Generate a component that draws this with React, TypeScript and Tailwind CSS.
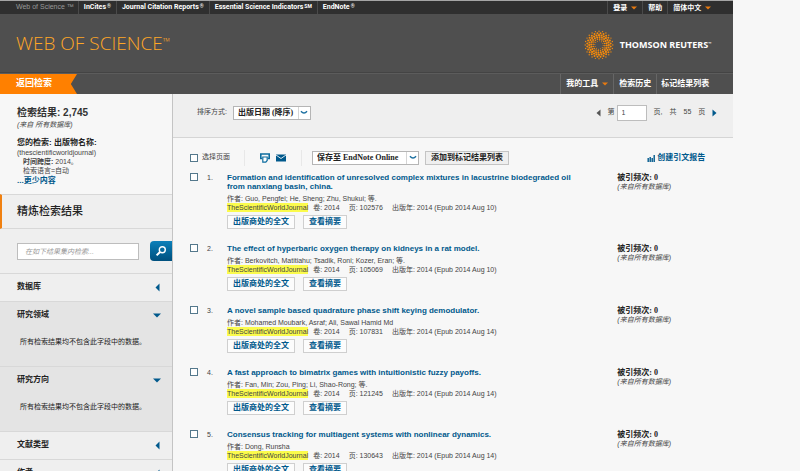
import React, { useState } from "react";

interface Article {
  id: number;
  title: string;
  authors: string;
  pages: string;
  published: string;
}

interface Facet {
  name: string;
  open: boolean;
}

const products = [
  { name: "InCites", mark: "®" },
  { name: "Journal Citation Reports", mark: "®" },
  { name: "Essential Science Indicators", mark: "SM" },
  { name: "EndNote", mark: "®" },
];

const articles: Article[] = [
  {
    id: 1,
    title:
      "Formation and identification of unresolved complex mixtures in lacustrine biodegraded oil from nanxiang basin, china.",
    authors: "Guo, Pengfei; He, Sheng; Zhu, Shukui; 等.",
    pages: "102576",
    published: "2014 (Epub 2014 Aug 10)",
  },
  {
    id: 2,
    title:
      "The effect of hyperbaric oxygen therapy on kidneys in a rat model.",
    authors: "Berkovitch, Matitiahu; Tsadik, Roni; Kozer, Eran; 等.",
    pages: "105069",
    published: "2014 (Epub 2014 Aug 10)",
  },
  {
    id: 3,
    title: "A novel sample based quadrature phase shift keying demodulator.",
    authors: "Mohamed Moubark, Asraf; Ali, Sawal Hamid Md",
    pages: "107831",
    published: "2014 (Epub 2014 Aug 14)",
  },
  {
    id: 4,
    title: "A fast approach to bimatrix games with intuitionistic fuzzy payoffs.",
    authors: "Fan, Min; Zou, Ping; Li, Shao-Rong; 等.",
    pages: "121245",
    published: "2014 (Epub 2014 Aug 14)",
  },
  {
    id: 5,
    title: "Consensus tracking for multiagent systems with nonlinear dynamics.",
    authors: "Dong, Runsha",
    pages: "130643",
    published: "2014 (Epub 2014 Aug 14)",
  },
];

const initialFacets: Facet[] = [
  { name: "数据库", open: false },
  { name: "研究领域", open: true },
  { name: "研究方向", open: true },
  { name: "文献类型", open: false },
  { name: "作者", open: false },
];

// dots of the logo, laid on rings that turn a little more towards the middle
const rings = [
  { radius: 13.8, count: 24, size: 0.7 },
  { radius: 11.8, count: 24, size: 1 },
  { radius: 9.8, count: 24, size: 1.1 },
  { radius: 7.8, count: 20, size: 1 },
  { radius: 5.9, count: 16, size: 0.8 },
  { radius: 4.2, count: 12, size: 0.5 },
];

const dots = rings.flatMap((ring, r) =>
  Array.from({ length: ring.count }, (_, i) => {
    const angle = (i / ring.count) * Math.PI * 2 + r * 0.13;
    return {
      x: 15 + ring.radius * Math.cos(angle),
      y: 15 + ring.radius * Math.sin(angle),
      size: ring.size,
    };
  }),
);

function LogoMark() {
  return (
    <svg viewBox="0 0 30 30" className="size-[30px]" aria-hidden="true">
      {dots.map((dot, i) => (
        <circle key={i} cx={dot.x} cy={dot.y} r={dot.size} fill="#f58a0b" />
      ))}
    </svg>
  );
}

function Caret() {
  return (
    <svg viewBox="0 0 6 4" className="h-1 w-1.5" aria-hidden="true">
      <path d="M0 0.5h6L3 3.5z" fill="#e87a10" />
    </svg>
  );
}

function SelectBox({
  label,
  value,
  className,
}: {
  label: string;
  value: string;
  className: string;
}) {
  return (
    <div className={`relative h-3.5 ${className}`}>
      <select
        aria-label={label}
        className="block h-full w-full appearance-none border border-[#b5b5b5] bg-white pr-3.5 pl-1 font-['Liberation_Serif','Noto_Sans_CJK_SC',serif] text-[8px] leading-3 font-bold text-[#222]"
      >
        <option>{value}</option>
      </select>
      <span className="pointer-events-none absolute inset-y-px right-px flex w-3 items-center justify-center border-l border-[#d5d5d5]">
        <svg viewBox="0 0 8 5" className="h-[5px] w-2" aria-hidden="true">
          <path
            d="M1 1.2 Q4 4.8 7 1.2"
            fill="none"
            stroke="#1b6fa0"
            strokeWidth="1.5"
          />
        </svg>
      </span>
    </div>
  );
}

function Checkbox({ label }: { label: string }) {
  return (
    <input
      type="checkbox"
      aria-label={label}
      className="size-2 shrink-0 appearance-none border border-[#54788c] bg-white checked:bg-[#00598c]"
    />
  );
}

function TopBar() {
  return (
    <div className="flex h-3.5 items-stretch border-t border-[#a5a5a5] bg-[#2f2f2f] text-[7px] leading-3 font-bold text-white">
      <span className="pr-1 pl-4 font-normal text-[#999]">
        Web of Science ™
      </span>
      {products.map((product) => (
        <a
          key={product.name}
          href="#"
          className="border-l border-[#4a4a4a] px-[5px] font-['Roboto',sans-serif]"
        >
          {product.name}
          <span className="pl-px align-[1px] text-[5px] leading-none">
            {product.mark}
          </span>
        </a>
      ))}
      <div className="ml-auto flex pr-[17px]">
        <button className="flex items-center gap-1 border-l border-[#4a4a4a] px-[5px]">
          登录 <Caret />
        </button>
        <button className="border-l border-[#4a4a4a] px-[5px]">帮助</button>
        <button className="flex items-center gap-1 border-l border-[#4a4a4a] px-[5px]">
          简体中文 <Caret />
        </button>
      </div>
    </div>
  );
}

function Header() {
  return (
    <header className="bg-[#4f4f4f] text-white">
      <TopBar />
      <div className="flex h-[59px] items-center justify-between border-b border-[#444] pr-[22px] pl-4">
        <a
          href="#"
          className="font-['Open_Sans',sans-serif] text-[19px] leading-6 font-light text-[#ffa726]"
        >
          WEB OF SCIENCE
          <span className="align-[5px] text-[10px] leading-none">™</span>
        </a>
        <div className="flex items-center gap-1.5 pt-1">
          <LogoMark />
          <span className="font-['Open_Sans',sans-serif] text-[9px] font-bold">
            THOMSON REUTERS
            <span className="align-[3px] text-[4px] leading-none">™</span>
          </span>
        </div>
      </div>
      <nav className="flex h-[21px] items-stretch justify-between border-t border-[#5c5c5c] text-[8px] font-bold">
        <a
          href="#"
          className="flex w-[77px] items-center bg-[#ff8000] pl-4 text-[9px] [clip-path:polygon(0_0,100%_0,92%_50%,100%_100%,0_100%)]"
        >
          返回检索
        </a>
        <div className="flex pr-5">
          <button className="flex items-center gap-1 border-l border-[#666] px-[5px]">
            我的工具 <Caret />
          </button>
          <a
            href="#"
            className="flex items-center border-l border-[#666] px-[5px]"
          >
            检索历史
          </a>
          <a
            href="#"
            className="flex items-center border-l border-[#666] px-1"
          >
            标记结果列表
          </a>
        </div>
      </nav>
    </header>
  );
}

function Sidebar() {
  const [facets, setFacets] = useState(initialFacets);

  const toggle = (name: string) => {
    setFacets(
      facets.map((facet) =>
        facet.name === name ? { ...facet, open: !facet.open } : facet,
      ),
    );
  };

  return (
    <aside className="w-[173px] shrink-0 border-r border-[#c4c4c4] bg-[#efefef]">
      <div className="h-[100px] bg-[#f7f7f7] pt-3 pl-[17px] text-[7px] leading-[9px] text-[#444]">
        <h1 className="text-[10px] leading-[14px] font-bold text-[#333]">
          检索结果: 2,745
        </h1>
        <p className="italic">(来自 所有数据库)</p>
        <p className="mt-2 text-[8px] leading-[11px]">
          <b className="text-[#222]">您的检索: 出版物名称:</b>
        </p>
        <p>(thescientificworldjournal)</p>
        <p className="pl-1.5">
          <b>时间跨度:</b> 2014。
        </p>
        <p className="pl-1.5">检索语言=自动</p>
        <a
          href="#"
          className="block text-[8px] leading-[11px] font-bold text-[#00598c]"
        >
          ...更少内容
        </a>
      </div>
      <h2 className="h-[35px] border-y border-l-2 border-y-[#d8d8d8] border-l-[#f08010] pl-[15px] text-[11px] leading-8 font-medium text-[#222]">
        精炼检索结果
      </h2>
      <form
        className="flex h-11 items-center justify-between pl-[17px]"
        onSubmit={(e) => e.preventDefault()}
      >
        <input
          type="text"
          aria-label="在如下结果集内检索"
          placeholder="在如下结果集内检索..."
          className="h-[17px] w-[122px] border border-[#bdbdbd] bg-white px-[7px] text-[7px] italic placeholder:text-[#999]"
        />
        <button
          aria-label="检索"
          className="flex h-5 w-[22px] items-center justify-center rounded-l-sm bg-linear-to-b from-[#0d80ba] to-[#00507e]"
        >
          <svg viewBox="0 0 12 12" className="size-3" aria-hidden="true">
            <circle
              cx="7.3"
              cy="4.7"
              r="3"
              fill="none"
              stroke="#fff"
              strokeWidth="1.4"
            />
            <path d="M5 7L1.6 10.4" stroke="#fff" strokeWidth="2" />
          </svg>
        </button>
      </form>
      {facets.map((facet) => (
        <section
          key={facet.name}
          className={`border-t border-[#d8d8d8] ${facet.open ? "bg-[#e4e4e4]" : ""}`}
        >
          <button
            aria-expanded={facet.open}
            onClick={() => toggle(facet.name)}
            className="flex h-[27px] w-full items-center justify-between pr-2.5 pb-px pl-[17px] text-[8px] font-bold text-[#222]"
          >
            {facet.name}
            <svg viewBox="0 0 10 10" className="size-2.5" aria-hidden="true">
              <path
                d={facet.open ? "M1 3.5h8L5 7.5z" : "M7.5 1.5v8L3.5 5.5z"}
                fill="#00598c"
              />
            </svg>
          </button>
          {facet.open && (
            <p className="h-[37px] pt-2 pl-5 text-[7px] leading-[9px] text-[#222]">
              所有检索结果均不包含此字段中的数据。
            </p>
          )}
        </section>
      ))}
    </aside>
  );
}

function SortBar() {
  return (
    <div className="flex h-11 items-center justify-between border-b border-[#d5d5d5] bg-[#efefef] pr-4 pb-1.5 pl-6 text-[7px] text-[#444]">
      <div className="flex items-center gap-1.5">
        <span>排序方式:</span>
        <SelectBox
          label="排序方式"
          value="出版日期 (降序)"
          className="w-[78px]"
        />
      </div>
      <div className="flex items-center gap-[7px]">
        <button aria-label="上一页">
          <svg viewBox="0 0 5 8" className="h-2 w-[5px]" aria-hidden="true">
            <path d="M4.5 0.5v7L0.5 4z" fill="#555" />
          </svg>
        </button>
        <label className="flex items-center gap-0.5">
          第
          <input
            type="text"
            defaultValue="1"
            className="h-4 w-[30px] border border-[#bdbdbd] bg-white px-1 text-[7px]"
          />
        </label>
        <span>页,</span>
        <span>共</span>
        <span>55</span>
        <span>页</span>
        <button aria-label="下一页">
          <svg viewBox="0 0 5 8" className="h-2 w-[5px]" aria-hidden="true">
            <path d="M0.5 0.5v7L4.5 4z" fill="#00598c" />
          </svg>
        </button>
      </div>
    </div>
  );
}

function Toolbar() {
  return (
    <div className="flex h-[35px] items-center pt-1 pr-7 pl-[17px] text-[8px] text-[#444]">
      <Checkbox label="选择页面" />
      <span className="pl-1 text-[7px]">选择页面</span>
      <div className="ml-3.5 flex h-4 items-center gap-1.5 border-x border-[#e8e8e8] px-[15px]">
        <button aria-label="打印">
          <svg viewBox="0 0 10 10" className="size-2.5" aria-hidden="true">
            <path
              d="M2 5.5H0.8V1h8.4v4.5H8"
              fill="none"
              stroke="#0c6c9f"
              strokeWidth="1.6"
            />
            <path
              d="M2.8 4h4.4v3.5L5.8 9.2h-3z"
              fill="#fff"
              stroke="#0c6c9f"
              strokeWidth="1.2"
            />
          </svg>
        </button>
        <button aria-label="电子邮件">
          <svg viewBox="0 0 10 8" className="h-2 w-2.5" aria-hidden="true">
            <path d="M0 0.5h10v7H0z" fill="#00598c" />
            <path
              d="M0 1l5 3.5L10 1"
              fill="none"
              stroke="#f7f7f7"
              strokeWidth="0.9"
            />
          </svg>
        </button>
      </div>
      <SelectBox
        label="保存"
        value="保存至 EndNote Online"
        className="ml-2.5 w-[107px]"
      />
      <button className="ml-1.5 h-3.5 border border-[#c4c4c4] bg-[#efefef] px-[5px] leading-3 font-bold text-[#222]">
        添加到标记结果列表
      </button>
      <a
        href="#"
        className="ml-auto flex items-center gap-0.5 font-bold text-[#00598c]"
      >
        <svg viewBox="0 0 8 8" className="size-2" aria-hidden="true">
          <path
            d="M1.2 8V4M3.2 8V3M5.2 8V4M7.2 8V1"
            stroke="#00598c"
            strokeWidth="1.4"
          />
        </svg>
        创建引文报告
      </a>
    </div>
  );
}

function ArticleRow({ article }: { article: Article }) {
  return (
    <li className="flex pl-[17px] text-[7px] leading-[9px] text-[#444]">
      <Checkbox label={`选择 ${article.id}`} />
      <span className="w-[29px] shrink-0 pl-[9px]">{article.id}.</span>
      <div className="min-w-0 flex-1 pr-8">
        <a
          href="#"
          className="block text-[8px] leading-[9px] font-bold text-[#00598c]"
        >
          {article.title}
        </a>
        <p className="mt-[3px]">作者: {article.authors}</p>
        <p className="flex gap-[5px]">
          <mark className="bg-[#fbfb4c] text-[#444]">
            TheScientificWorldJournal
          </mark>
          <span className="pr-1">卷: 2014</span>
          <span className="pr-1">页: {article.pages}</span>
          <span>出版年: {article.published}</span>
        </p>
        <div className="mt-[3px] flex gap-2 text-[8px] leading-3 font-bold text-[#00598c]">
          <button className="h-3.5 border border-[#cfcfcf] bg-[#fcfcfc] px-[5px]">
            出版商处的全文
          </button>
          <button className="h-3.5 border border-[#cfcfcf] bg-[#fcfcfc] px-[5px]">
            查看摘要
          </button>
        </div>
      </div>
      <div className="w-[116px] shrink-0">
        <p className="font-['Liberation_Serif','Noto_Sans_CJK_SC',serif] text-[8px] leading-[9px] font-bold text-[#222]">
          被引频次: 0
        </p>
        <p className="italic">(来自所有数据库)</p>
      </div>
    </li>
  );
}

export default function App() {
  return (
    <div className="min-h-screen bg-[#f7f7f7] font-['Liberation_Sans','Noto_Sans_CJK_SC',sans-serif]">
      <div className="w-11/12">
        <Header />
        <div className="flex">
          <Sidebar />
          <main className="min-w-0 flex-1">
            <SortBar />
            <Toolbar />
            <ol className="flex flex-col gap-[15px]">
              {articles.map((article) => (
                <ArticleRow key={article.id} article={article} />
              ))}
            </ol>
          </main>
        </div>
      </div>
    </div>
  );
}
